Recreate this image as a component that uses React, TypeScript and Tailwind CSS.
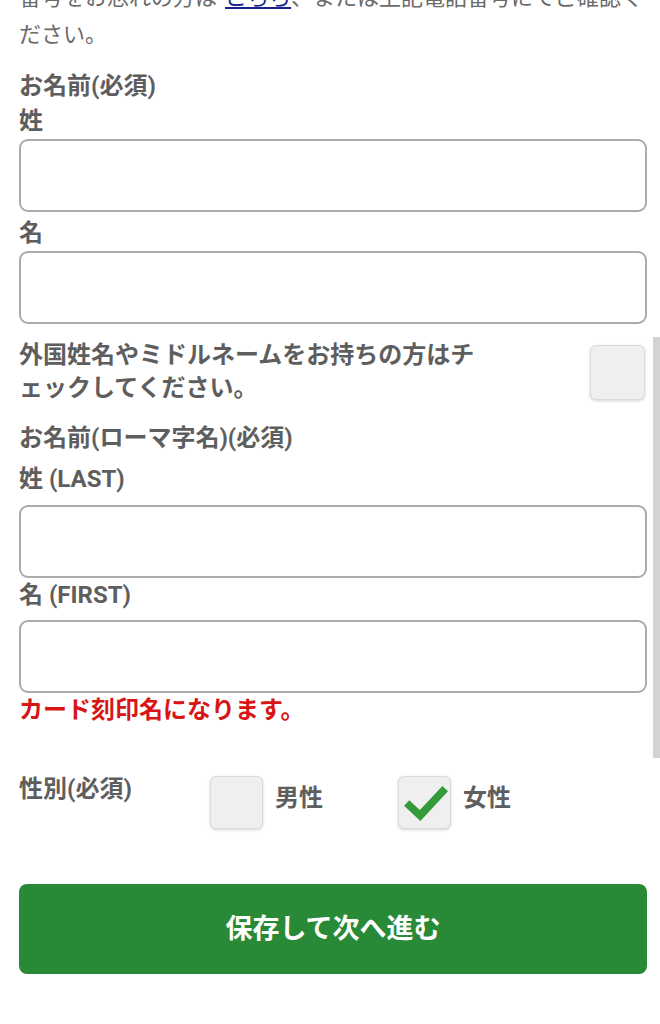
import React from 'react';

const FONT = { fontFamily: 'Roboto, "Noto Sans CJK JP", sans-serif' };

const TextInput = ({ className = '' }: { className?: string }) => (
    <input
        type="text"
        className={`block w-full h-[73px] border-2 border-[#ababab] rounded-[9px] bg-white outline-none ${className}`}
    />
);

type BoxProps = {
    checked?: boolean;
    className?: string;
};

const CheckBox = ({ checked = false, className = '' }: BoxProps) => (
    <span
        className={`relative shrink-0 block bg-[#efefef] border border-[#dadada] rounded-[6px] shadow-[0_1px_3px_rgba(0,0,0,0.18)] ${className}`}
    >
        {checked && (
            <svg viewBox="0 0 53 53" className="absolute inset-0 w-full h-full">
                <polyline
                    points="8,27 22,40 48,12"
                    fill="none"
                    stroke="#359a3a"
                    strokeWidth="8"
                    strokeLinejoin="miter"
                />
            </svg>
        )}
    </span>
);

const Label = ({
    children,
    className = '',
}: {
    children: React.ReactNode;
    className?: string;
}) => (
    <p className={`text-[24px] leading-[35px] font-bold text-[#5e5e5e] ${className}`}>
        {children}
    </p>
);

export default function App() {
    return (
        <div className="relative h-[1024px] w-full overflow-hidden bg-white" style={FONT}>
            <div className="absolute right-0 top-[337px] w-[7px] h-[421px] bg-[#d3d3d3]"></div>

            <div className="pl-[19px] pr-[13px]">
                <p className="-mt-[21px] text-[22px] leading-[37px] text-[#6a6a6a]">
                    番号をお忘れの方は
                    <a href="#" className="ml-[8px] text-[#1b1f8f] underline underline-offset-2">
                        こちら
                    </a>
                    、または上記電話番号にてご確認く
                    <br />
                    ださい。
                </p>

                <Label className="mt-[16px]">お名前(必須)</Label>
                <Label>姓</Label>
                <TextInput />
                <Label className="pt-[4px]">名</Label>
                <TextInput />

                <div className="flex items-start justify-between mt-[15px]">
                    <p className="w-[468px] text-[24px] leading-[33px] font-bold text-[#5e5e5e]">
                        外国姓名やミドルネームをお持ちの方はチェックしてください。
                    </p>
                    <CheckBox className="w-[55px] h-[55px] mt-[6px] mr-[2px]" />
                </div>

                <Label className="mt-[16px]">お名前(ローマ字名)(必須)</Label>
                <Label className="mt-[6px]">姓 (LAST)</Label>
                <TextInput className="mt-[8px]" />
                <Label>名 (FIRST)</Label>
                <TextInput className="mt-[7px]" />
                <p className="text-[24px] leading-[35px] font-bold text-[#d81515]">
                    カード刻印名になります。
                </p>

                <div className="flex items-start mt-[44px]">
                    <Label className="w-[191px]">性別(必須)</Label>
                    <CheckBox className="w-[53px] h-[53px] mt-[4px]" />
                    <span className="ml-[12px] mt-[9px] text-[24px] leading-[35px] font-bold text-[#5e5e5e]">
                        男性
                    </span>
                    <CheckBox checked className="w-[53px] h-[53px] mt-[4px] ml-[75px]" />
                    <span className="ml-[12px] mt-[9px] text-[24px] leading-[35px] font-bold text-[#5e5e5e]">
                        女性
                    </span>
                </div>

                <button
                    type="button"
                    className="mt-[55px] flex w-full h-[90px] items-center justify-center rounded-[8px] bg-[#288a37] text-[27px] font-bold text-white"
                >
                    保存して次へ進む
                </button>
            </div>
        </div>
    );
}
